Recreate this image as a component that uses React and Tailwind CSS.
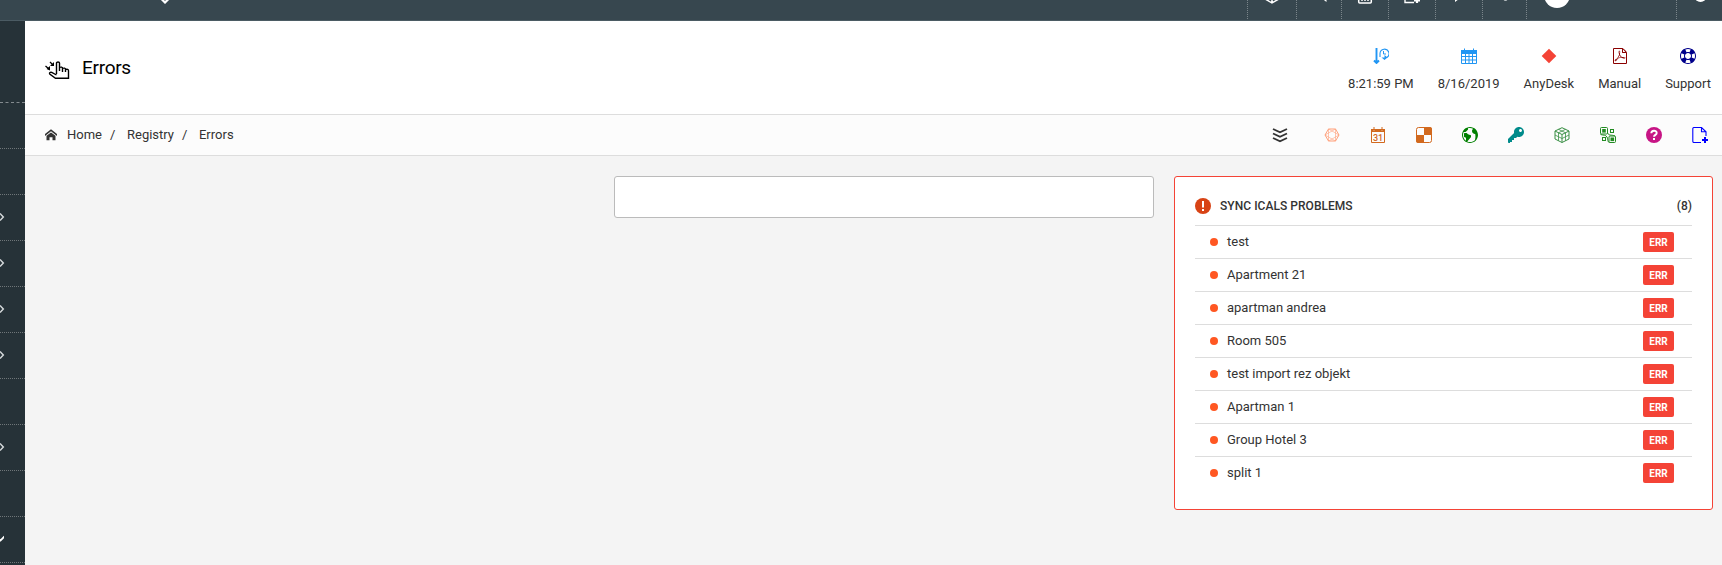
import React from 'react';
import { ImHome, ImFilePdf, ImLifebuoy, ImEarth, ImKey } from 'react-icons/im';

const problems = [
  'test',
  'Apartment 21',
  'apartman andrea',
  'Room 505',
  'test import rez objekt',
  'Apartman 1',
  'Group Hotel 3',
  'split 1',
];

function Icon({ className = 'h-4 w-4', children, ...props }) {
  return (
    <svg viewBox="0 0 16 16" fill="none" stroke="currentColor" className={className} {...props}>
      {children}
    </svg>
  );
}

function HandIcon() {
  return (
    <svg viewBox="0 0 25 20" className="h-5 w-[25px]" fill="none" stroke="black" strokeWidth="1.4">
      <path d="M9 1v4H5zM5 5v4.500L1.500 8z" fill="black" stroke="none" />
      <path d="M5 1l3 3M.5 5l3.500 3" strokeWidth="1.300" />
      <path d="M11.500 13V2c0-1.300 3-1.300 3 0v8M14.500 6.500c1.500-.8 3-.3 3 .8V11M17.500 7.500c1.500-.8 3-.3 3 .8V11M20.500 8.500c1.700-.7 3 0 3 1.200V17.300H10.500L4.700 13c-.8-1.300.8-2.200 2-1.600l4.800 2.600" />
    </svg>
  );
}

function SortTimeIcon() {
  return (
    <Icon>
      <path d="M3.500 0v14M1 12.500l2.500 2.500L6 12.500" strokeWidth="1.900" />
      <path d="M7 9V5.500a4.500 4.500 0 1 1 6.500 4.200" strokeWidth="1.100" />
      <path d="M10.500 3v3h2.500" />
      <path d="M8.500 9.500h3V7l3 2.500-3 2.500z" fill="currentColor" stroke="none" />
    </Icon>
  );
}

function CalendarIcon() {
  return (
    <Icon>
      <path d="M0 2h3V.5h1V2h8V.5h1V2h3v3H0z" fill="currentColor" stroke="none" />
      <path d="M.5 5v10.500h15V5M.5 8.500h15M.5 12h15M4.500 5v10.500M8 5v10.500M11.500 5v10.500M.5 5.500h15" />
    </Icon>
  );
}

function DiamondIcon() {
  return (
    <Icon>
      <path d="M8 .7L15.300 8 8 15.300.7 8z" fill="currentColor" stroke="none" />
    </Icon>
  );
}

function ChevronsIcon() {
  return (
    <Icon>
      <path d="M1 2l7 3.300L15 2M1 6.500l7 3.300 7-3.300M1 11l7 3.300 7-3.300" strokeWidth="1.900" />
    </Icon>
  );
}

function HexagonIcon() {
  return (
    <Icon strokeWidth="1">
      <path d="M4.500 2h7L15 8l-3.500 6h-7L1 8z" />
      <path d="M4.500 2L15 8 4.500 14zM11.500 2L1 8l10.500 6z" strokeWidth=".6" />
    </Icon>
  );
}

function DateIcon() {
  return (
    <Icon>
      <path d="M1.500 4v11.500h13V4" />
      <path d="M1 2h2.500v1.500h1V2h7v1.500h1V2H15v3H1zM3.500 0h1v3h-1zM11.500 0h1v3h-1z" fill="currentColor" stroke="none" />
      <text
        x="8"
        y="13.500"
        textAnchor="middle"
        fontSize="9"
        fill="currentColor"
        stroke="none"
        className="font-[Roboto] font-medium"
      >
        31
      </text>
    </Icon>
  );
}

function CheckerIcon() {
  return (
    <Icon>
      <rect x=".5" y=".5" width="15" height="15" rx="2" />
      <path d="M8 0h6a2 2 0 0 1 2 2v6H8zM0 8h8v8H2a2 2 0 0 1-2-2z" fill="currentColor" stroke="none" />
    </Icon>
  );
}

function CubeIcon() {
  return (
    <Icon strokeWidth="1">
      <path d="M8 .7l7 3.300v8l-7 3.500L1 12V4zM1 4l7 3.500L15 4M8 7.500v8" />
      <path d="M4.500 2.300l7 3.500v8M11.500 2.300l-7 3.500v8M1 8l7 3.500L15 8" strokeWidth=".8" />
    </Icon>
  );
}

function NodesIcon() {
  return (
    <Icon>
      <rect x=".5" y=".5" width="7" height="6.500" rx="1" />
      <rect x="2.200" y="2" width="3.600" height="3.600" fill="currentColor" stroke="none" />
      <rect x="10.500" y="2.500" width="3" height="3" />
      <rect x="9" y="9" width="6.500" height="6.500" rx="1" />
      <rect x="10.500" y="10.500" width="3.600" height="3.600" fill="currentColor" stroke="none" />
      <rect x="2.500" y="10.500" width="3" height="3" />
      <path d="M.5 7.500c3 1 5 0 6.500 2.500s0 5 2.500 5.500M7.500 6c1.500 3 4 1.500 7.500 3" />
    </Icon>
  );
}

function HelpIcon() {
  return (
    <Icon>
      <circle cx="8" cy="8" r="8" fill="currentColor" stroke="none" />
      <path d="M5.300 6.200c0-3.300 5.400-3.300 5.400-.3 0 2-2.700 1.900-2.700 3.900" stroke="white" strokeWidth="1.900" />
      <path d="M7 11h2v2H7z" fill="white" stroke="none" />
    </Icon>
  );
}

function FilePlusIcon() {
  return (
    <Icon>
      <path d="M9 15.500H2a1.200 1.200 0 0 1-1.200-1.200V1.700A1.200 1.200 0 0 1 2 .5h7.500l4.500 4.300V9M9.500.5v4.300H14" strokeWidth="1.100" />
      <path d="M13 10v6M10 13h6" strokeWidth="2" />
    </Icon>
  );
}

function AlertIcon() {
  return (
    <Icon>
      <circle cx="8" cy="8" r="8" fill="currentColor" stroke="none" />
      <path d="M7 3h2v6.500H7zM7 11h2v2H7z" fill="white" stroke="none" />
    </Icon>
  );
}

const shortcuts = [
  { label: '8:21:59 PM', icon: <SortTimeIcon />, color: 'text-[#2196f3]' },
  { label: '8/16/2019', icon: <CalendarIcon />, color: 'text-[#2196f3]' },
  { label: 'AnyDesk', icon: <DiamondIcon />, color: 'text-[#f44336]' },
  { label: 'Manual', icon: <ImFilePdf />, color: 'text-[#8b0000]' },
  { label: 'Support', icon: <ImLifebuoy />, color: 'text-[#00008b]' },
];

const tools = [
  { icon: <HexagonIcon />, color: 'text-[#ffa07a]' },
  { icon: <DateIcon />, color: 'text-[#d2691e]' },
  { icon: <CheckerIcon />, color: 'text-[#d2691e]' },
  { icon: <ImEarth />, color: 'text-[#008000]' },
  { icon: <ImKey />, color: 'text-[#008b8b]' },
  { icon: <CubeIcon />, color: 'text-[#3a8f45]' },
  { icon: <NodesIcon />, color: 'text-[#228b22]' },
  { icon: <HelpIcon />, color: 'text-[#c71585]' },
  { icon: <FilePlusIcon />, color: 'text-[#0000ff]' },
];

// 'right' and 'down' are the submenu arrows at the edge of the sidebar
const menu = [null, null, 'right', 'right', 'right', 'right', null, 'right', null, 'down'];

function Navbar() {
  const cell = 'flex h-[19px] justify-center border-l border-dotted border-[#7b868b]';
  const icon = '-mt-3 h-4 w-4';
  return (
    <div className="flex h-[21px] items-start overflow-hidden border-b border-[#4b5b63] bg-[#37474f] text-white">
      <div className="ml-[157px] flex-1">
        <Icon className="-mt-3 h-4 w-4">
          <path d="M3.500 10l4.500 4.500 4.500-4.500" strokeWidth="2.200" />
        </Icon>
      </div>
      <div className={`w-[49px] ${cell}`}>
        <Icon className={icon}>
          <path d="M2 4v7.500l6 3.500 6-3.500V4M8 7v8" strokeWidth="1.500" />
        </Icon>
      </div>
      <div className={`w-[45px] ${cell}`}>
        <Icon className="-mt-3 ml-3 h-4 w-4">
          <path d="M5 10.500l4.500 3.500v-3.500z" fill="currentColor" stroke="none" />
        </Icon>
      </div>
      <div className={`w-[47px] ${cell}`}>
        <Icon className={icon}>
          <path d="M1.700 5v9c0 1 .5 1 1 1h10.600c.5 0 1 0 1-1V5M5 10v3M8 10v3M11 10v3" strokeWidth="1.500" />
        </Icon>
      </div>
      <div className={`w-[47px] ${cell}`}>
        <Icon className={icon}>
          <path d="M1 8v6.500h9" strokeWidth="1.400" />
          <path d="M13 9v6M10 12.500h6" strokeWidth="2.200" />
        </Icon>
      </div>
      <div className={`w-[47px] ${cell}`}>
        <Icon className={icon}>
          <path d="M4 14v-3h4z" fill="currentColor" stroke="none" />
        </Icon>
      </div>
      <div className={`w-[44px] ${cell}`}>
        <Icon className={icon}>
          <circle cx="8.500" cy="11" r="2" fill="#b9c0c4" stroke="none" />
        </Icon>
      </div>
      <div className="flex h-[19px] w-[150px] border-l border-dotted border-[#7b868b]">
        <div className="-mt-[18px] ml-[17px] h-[26px] w-[26px] rounded-full bg-white" />
      </div>
      <div className={`w-[46px] ${cell}`}>
        <Icon className="-mt-[14px] h-4 w-4">
          <circle cx="8.500" cy="10" r="6" fill="currentColor" stroke="none" />
        </Icon>
      </div>
    </div>
  );
}

function Sidebar() {
  return (
    <div className="w-[25px] shrink-0 overflow-hidden bg-[#263238]">
      <div className="h-[82px] border-b border-dashed border-[#848b8f]" />
      {menu.map((arrow, i) => (
        <div key={i} className="flex h-[46px] items-center border-b border-dotted border-[#6f7679] pb-px text-[#d5d9db]">
          {arrow === 'right' && (
            <Icon className="-ml-2 h-4 w-4">
              <path d="M8 4.500l3.300 3.500L8 11.500" strokeWidth="1.500" />
            </Icon>
          )}
          {arrow === 'down' && (
            <Icon className="-ml-3 h-4 w-4" stroke="white">
              <path d="M8.500 5.500l4 4 4-4" strokeWidth="1.800" />
            </Icon>
          )}
        </div>
      ))}
    </div>
  );
}

function Header() {
  return (
    <div className="flex h-[94px] justify-between border-b border-[#ddd] bg-white pr-[11px] pl-5">
      <div className="flex pt-10">
        <HandIcon />
        <h1 className="-mt-[5px] ml-3 text-[19px] leading-[24px] tracking-[-0.015em] text-black">Errors</h1>
      </div>
      <div className="flex gap-6 pt-[27px]">
        {shortcuts.map((item) => (
          <div key={item.label} className="flex flex-col items-center gap-[10px]">
            <span className={`text-base leading-none ${item.color}`}>{item.icon}</span>
            <span className="text-[13px] leading-5">{item.label}</span>
          </div>
        ))}
      </div>
    </div>
  );
}

function Toolbar() {
  return (
    <div className="flex h-[41px] items-center justify-between border-b border-[#ddd] bg-[#fcfcfc] pr-[14px] pl-5">
      <div className="flex items-center text-[13px]">
        <ImHome className="mr-[10px] h-3 w-3" />
        <span>Home</span>
        <span className="mr-3 ml-2 w-[5px]">/</span>
        <span>Registry</span>
        <span className="mr-3 ml-2 w-[5px]">/</span>
        <span>Errors</span>
      </div>
      <div className="flex items-center text-base">
        <span className="mr-9">
          <ChevronsIcon />
        </span>
        <div className="flex gap-[30px]">
          {tools.map((tool, i) => (
            <span key={i} className={tool.color}>
              {tool.icon}
            </span>
          ))}
        </div>
      </div>
    </div>
  );
}

function ProblemsCard() {
  return (
    <div className="h-[334px] w-[539px] rounded-[3px] border border-[#f44336] bg-white px-5 pt-5">
      <div className="flex h-[28px] items-center pb-[10px] text-[12px] font-medium">
        <span className="text-[#d84315]">
          <AlertIcon />
        </span>
        <span className="ml-[9px] flex-1 tracking-[0.04px]">SYNC ICALS PROBLEMS</span>
        <span>(8)</span>
      </div>
      {problems.map((name) => (
        <div key={name} className="flex h-[33px] items-center border-t border-[#ddd] pr-[18px] pl-[15px]">
          <span className="h-2 w-2 rounded-full bg-[#ff5722]" />
          <span className="ml-[9px] flex-1 text-[13px] leading-5">{name}</span>
          <span className="flex h-5 w-[31px] items-center justify-center rounded-[2px] bg-[#f44336] text-[10px] font-bold text-white">
            ERR
          </span>
        </div>
      ))}
    </div>
  );
}

export default function App() {
  return (
    <div className="flex h-[565px] w-[1722px] flex-col overflow-hidden bg-[#f4f4f4] font-[Roboto,sans-serif] text-[#333]">
      <Navbar />
      <div className="flex min-h-0 flex-1">
        <Sidebar />
        <div className="flex-1">
          <Header />
          <Toolbar />
          <div className="flex items-start justify-end gap-5 pt-5 pr-[9px]">
            <div className="h-[42px] w-[540px] rounded-[3px] border border-[#bbb] bg-white" />
            <ProblemsCard />
          </div>
        </div>
      </div>
    </div>
  );
}
